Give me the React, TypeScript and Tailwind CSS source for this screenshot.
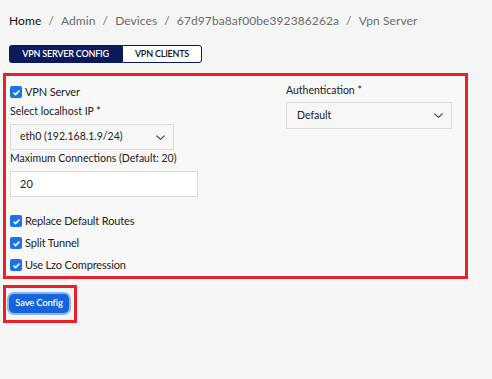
import React from "react";

function Check() {
  return (
    <span className="w-[12px] h-[12px] rounded-[2px] bg-[#1a73e8] flex items-center justify-center shrink-0">
      <svg width="9" height="9" viewBox="0 0 10 10">
        <path d="M1.8 5.2 L4 7.3 L8.3 2.8" stroke="white" strokeWidth="1.8" fill="none" />
      </svg>
    </span>
  );
}

function CheckRow({ label, className = "" }: { label: string; className?: string }) {
  return (
    <div className={"flex items-center gap-[3px] h-[16px] text-[11px] tracking-[-0.15px] text-[#222] " + className}>
      <Check />
      <span>{label}</span>
    </div>
  );
}

function Chevron() {
  return (
    <svg width="11" height="11" viewBox="0 0 12 12">
      <path d="M1.5 4 L6 8 L10.5 4" stroke="#333" strokeWidth="1.2" fill="none" />
    </svg>
  );
}

export default function App() {
  return (
    <div className="w-[492px] h-[379px] bg-[#f5f5f5] overflow-hidden" style={{ fontFamily: "Lato, 'Open Sans', sans-serif" }}>
      <div className="pl-[9px] pt-[13px] h-[16px] box-content flex items-center text-[12px] tracking-[0.1px] text-[#6b6b6b] whitespace-nowrap">
        <span className="text-[#111]">Home</span>
        <span className="mx-[7px]">/</span>
        <span>Admin</span>
        <span className="mx-[7px]">/</span>
        <span>Devices</span>
        <span className="mx-[7px]">/</span>
        <span>67d97ba8af00be392386262a</span>
        <span className="mx-[7px]">/</span>
        <span>Vpn Server</span>
      </div>
      <div className="ml-[9px] mt-[16px] flex h-[18px] w-[193px] text-[9px] font-semibold">
        <div className="w-[113px] bg-[#0c1a5b] text-white rounded-l-[3px] flex items-center justify-center tracking-[-0.2px]">VPN SERVER CONFIG</div>
        <div className="flex-1 bg-white text-[#111] border border-[#0c1a5b] rounded-r-[3px] flex items-center justify-center tracking-[-0.2px]">VPN CLIENTS</div>
      </div>
      <div className="ml-[3px] mt-[10px] w-[465px] border-[3px] border-[#e8202a] bg-[#f8f8f8] pl-[4px] pr-[14px] pt-[8px] pb-[3px] grid grid-cols-[276px_1fr]">
        <div className="flex flex-col">
          <CheckRow label="VPN Server" />
          <div className="mt-[4px] h-[16px] flex items-center text-[10.5px] text-[#222]">Select localhost IP *</div>
          <div className="mt-[4px] w-[164px] h-[26px] border border-[#dcdcdc] bg-[#f7f7f7] flex items-center justify-between pl-[9px] pr-[7px] text-[10.5px] text-[#222]">
            <span>eth0 (192.168.1.9/24)</span>
            <Chevron />
          </div>
          <div className="mt-[1px] h-[16px] flex items-center text-[10.5px] text-[#222]">Maximum Connections (Default: 20)</div>
          <div className="mt-[4px] w-[188px] h-[26px] border border-[#dcdcdc] bg-white flex items-center pl-[9px] text-[11px] text-[#222]">20</div>
          <CheckRow label="Replace Default Routes" className="mt-[16px]" />
          <CheckRow label="Split Tunnel" className="mt-[6px]" />
          <CheckRow label="Use Lzo Compression" className="mt-[6px]" />
        </div>
        <div className="flex flex-col">
          <div className="h-[16px] flex items-center text-[10.5px] text-[#222] -mt-[1px]">Authentication *</div>
          <div className="mt-[3px] w-[166px] h-[27px] border border-[#dcdcdc] bg-[#f7f7f7] flex items-center justify-between pl-[10px] pr-[7px] text-[10.5px] text-[#222]">
            <span>Default</span>
            <Chevron />
          </div>
        </div>
      </div>
      <div className="ml-[3px] mt-[6px] w-[74px] h-[38px] border-[3px] border-[#e8202a] pl-[3px] pt-[6px]">
        <div className="w-[60px] h-[19px] rounded-[5px] bg-[#1663dc] ring-2 ring-[#8bb4f5] flex items-center justify-center text-white text-[9.5px] tracking-[-0.2px] font-semibold">
          Save Config
        </div>
      </div>
    </div>
  );
}
